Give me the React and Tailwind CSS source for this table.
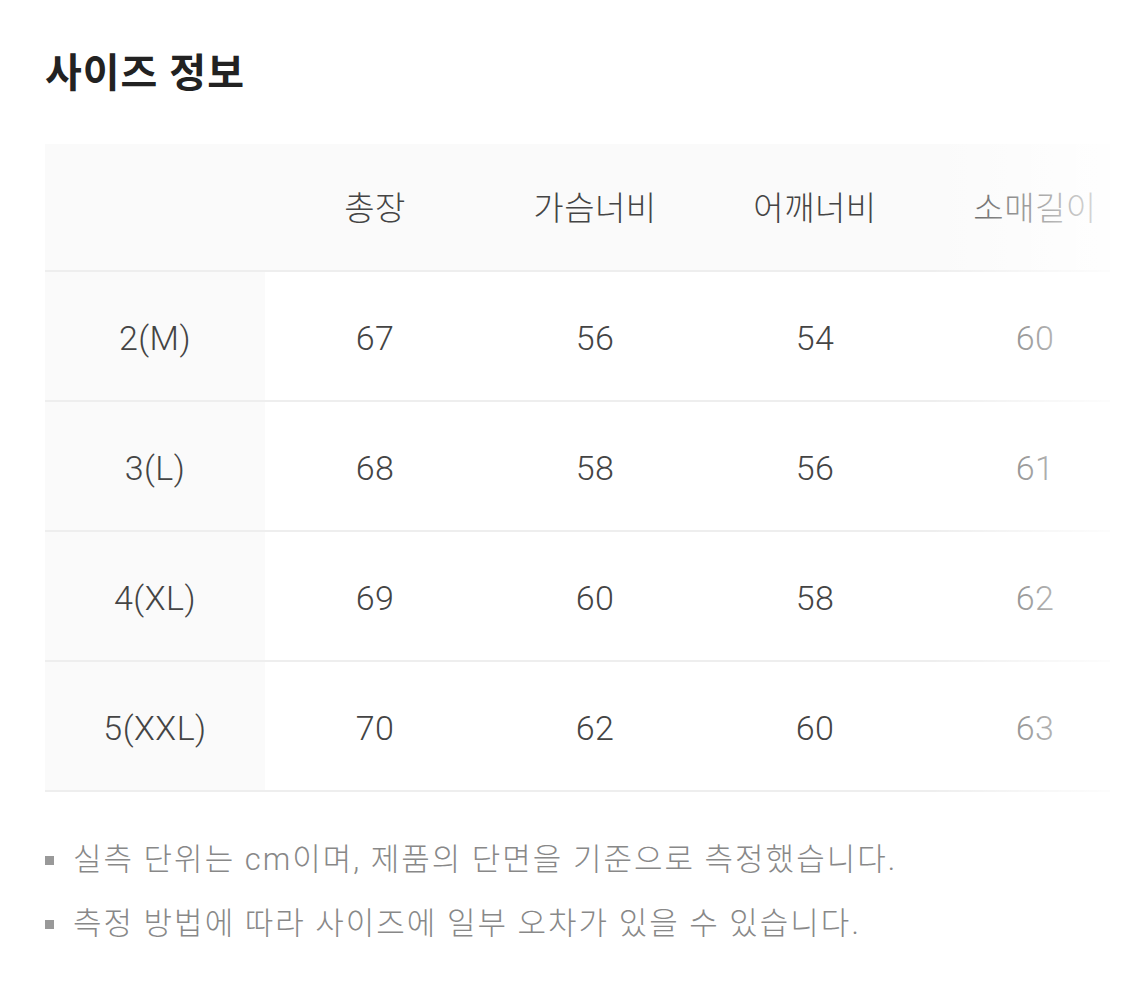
import React from "react";

const cols = ["총장", "가슴너비", "어깨너비", "소매길이"];
const rows = [
  ["2(M)", "67", "56", "54", "60"],
  ["3(L)", "68", "58", "56", "61"],
  ["4(XL)", "69", "60", "58", "62"],
  ["5(XXL)", "70", "62", "60", "63"],
];

const font = { fontFamily: '"Roboto", "Noto Sans CJK KR", sans-serif' };

export default function App() {
  return (
    <div className="bg-white w-[1125px] h-[1001px] pl-[45px] pr-[15px] pt-[44px] text-[#444]" style={font}>
      <h1 className="text-[40px] font-bold text-[#222] leading-[60px] tracking-[1px]">사이즈 정보</h1>
      <div className="relative overflow-hidden mt-[40px] w-[1065px]">
        <div className="w-[1100px]">
          <div className="grid grid-cols-[220px_220px_220px_220px_220px] h-[128px] pt-[4px] bg-[#fafafa] border-b-2 border-[#eeeeee] items-center text-[33px] font-light tracking-[0.5px]">
            <div></div>
            {cols.map((c) => (
              <div key={c} className="text-center">{c}</div>
            ))}
          </div>
          {rows.map((r) => (
            <div key={r[0]} className="grid grid-cols-[220px_220px_220px_220px_220px] h-[130px] border-b-2 border-[#eeeeee] text-[34px] font-light tracking-[0.5px]">
              {r.map((v, i) => (
                <div key={i} className={"flex items-center justify-center pt-[4px] " + (i === 0 ? "bg-[#fafafa]" : "")}>{v}</div>
              ))}
            </div>
          ))}
        </div>
        <div className="absolute top-0 bottom-0 right-0 w-[180px] bg-linear-to-r from-white/0 via-white/45 to-white/85"></div>
      </div>
      <div className="mt-[46px] flex flex-col gap-[20px] text-[31px] font-light tracking-[2px] text-[#888]">
        <div className="flex items-center h-[44px]">
          <span className="w-[9px] h-[9px] bg-[#999] mr-[19px]"></span>
          <span>실측 단위는 cm이며, 제품의 단면을 기준으로 측정했습니다.</span>
        </div>
        <div className="flex items-center h-[44px]">
          <span className="w-[9px] h-[9px] bg-[#999] mr-[19px]"></span>
          <span>측정 방법에 따라 사이즈에 일부 오차가 있을 수 있습니다.</span>
        </div>
      </div>
    </div>
  );
}
